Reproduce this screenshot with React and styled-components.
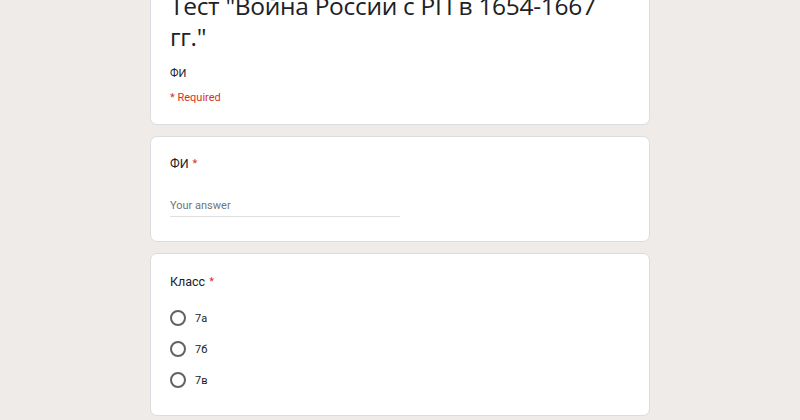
import React from "react";
import styled, { createGlobalStyle } from "styled-components";

const Global = createGlobalStyle`
  html, body { margin: 0; padding: 0; background: #efebe9; overflow: hidden; }
  body { font-family: Roboto, "Noto Sans", Arial, sans-serif; color: #202124; }
`;

const Page = styled.div`
  width: 500px;
  margin: -11px auto 0;
  display: flex;
  flex-direction: column;
  gap: 11px;
`;

const Card = styled.section`
  box-sizing: border-box;
  background: #fff;
  border: 1px solid #dadce0;
  border-radius: 7px;
  padding: ${(p) => p.$pad || "19px 19px 24px"};
`;

const Title = styled.h1`
  margin: 0;
  font-family: "Open Sans", Roboto, sans-serif;
  font-weight: 400;
  font-size: 24.5px;
  line-height: 31px;
  letter-spacing: -0.3px;
  color: #202124;
`;

const Desc = styled.p`
  margin: ${(p) => p.$m || "0"};
  font-size: 11px;
  line-height: 16px;
  color: ${(p) => (p.$red ? "#d93025" : "#202124")};
`;

const QTitle = styled.div`
  font-size: 12.5px;
  line-height: 19px;
  color: #202124;
`;

const Star = styled.span`
  color: #d93025;
  margin-left: 4px;
  font-size: 11px;
  vertical-align: 1px;
`;

const Answer = styled.div`
  margin-top: 25px;
  width: 230px;
  font-size: 11px;
  line-height: 16px;
  color: #70757a;
  padding-bottom: 2px;
  border-bottom: 1px solid #e0e0e0;
`;

const Options = styled.div`
  margin-top: 17px;
  display: flex;
  flex-direction: column;
  gap: 11px;
`;

const Option = styled.label`
  display: flex;
  align-items: center;
  height: 20px;
  font-size: 11px;
  color: #202124;
`;

const Radio = styled.span`
  box-sizing: border-box;
  width: 16px;
  height: 16px;
  border: 2px solid #5f6368;
  border-radius: 50%;
  margin-right: 9px;
`;

export default function App() {
  return (
    <>
      <Global />
      <Page>
        <Card $pad="0 19px 18px">
          <Title>
            Тест "Война России с РП в 1654-1667
            <br />
            гг."
          </Title>
          <Desc $m="14px 0 0">ФИ</Desc>
          <Desc $red $m="8px 0 0">* Required</Desc>
        </Card>
        <Card $pad="17px 19px 24px">
          <QTitle>
            ФИ<Star>*</Star>
          </QTitle>
          <Answer>Your answer</Answer>
        </Card>
        <Card $pad="18px 19px 25px">
          <QTitle>
            Класс<Star>*</Star>
          </QTitle>
          <Options>
            {["7а", "7б", "7в"].map((o) => (
              <Option key={o}>
                <Radio />
                {o}
              </Option>
            ))}
          </Options>
        </Card>
      </Page>
    </>
  );
}
